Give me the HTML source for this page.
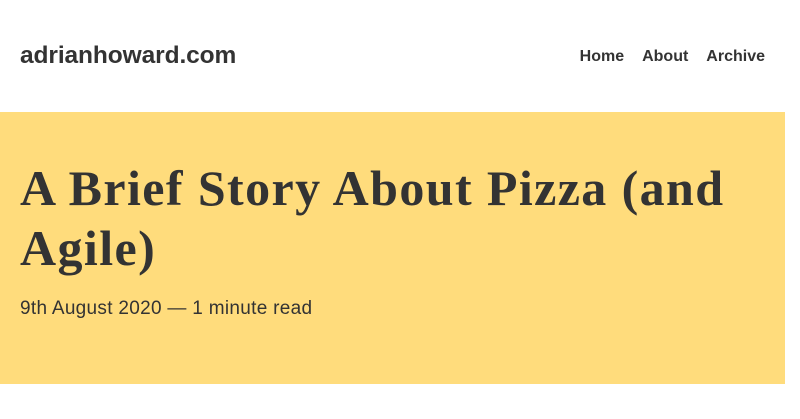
<!DOCTYPE html>
<html><head><style>
body{margin:0;width:800px;height:419px;overflow:hidden;background:#fff;color:#333;font-family:"Liberation Sans",sans-serif}
.hdr{height:112px;position:relative}
.logo{position:absolute;left:20px;top:42px;font-size:24.5px;font-weight:bold;letter-spacing:-0.1px}
.nav{position:absolute;right:35px;top:48px;font-size:16px;font-weight:bold;color:#333}
.nav span{margin-left:18px}
.band{position:absolute;top:112px;left:0;width:785px;height:272px;background:#FFDC7C}
h1{position:absolute;left:20px;top:46px;margin:0;font-family:"Liberation Serif",serif;font-weight:bold;font-size:50px;line-height:60px;width:760px;letter-spacing:1.4px}
.meta{position:absolute;left:20px;top:186px;font-size:19px;letter-spacing:0.3px}
</style></head><body>
<div class="hdr"><div class="logo">adrianhoward.com</div>
<div class="nav"><span>Home</span><span>About</span><span>Archive</span></div></div>
<div class="band"><h1>A Brief Story About Pizza (and Agile)</h1>
<div class="meta">9th August 2020 — 1 minute read</div></div>
</body></html>
